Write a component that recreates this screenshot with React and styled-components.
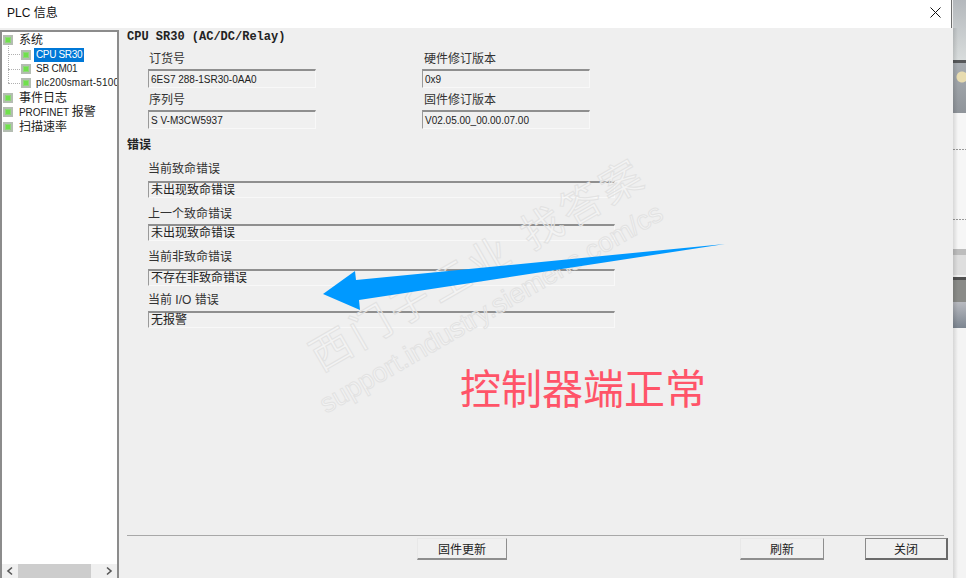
import React from "react";
import styled, { createGlobalStyle } from "styled-components";

const GlobalStyle = createGlobalStyle`
    html, body {
        margin: 0;
        padding: 0;
        background: #f4f4f4;
    }
    body {
        font-family: "Liberation Sans", "Noto Sans CJK SC", sans-serif;
        font-size: 12px;
        color: #222;
        overflow: hidden;
    }
    * { box-sizing: border-box; }
`;

const Page = styled.div`
    position: relative;
    width: 966px;
    height: 578px;
    display: flex;
    overflow: hidden;
`;

const Dialog = styled.div`
    width: 953px;
    height: 578px;
    display: flex;
    flex-flow: column nowrap;
    background: #efefef;
`;

const TitleBar = styled.div`
    height: 28px;
    width: 952px;
    padding: 5px 10px 0 7px;
    display: flex;
    justify-content: space-between;
    background: #fff;
    border-right: 1px solid #6e6e6e;
    font-size: 12px;
    line-height: 17px;
    color: #111;
`;

const CloseIcon = styled.svg`
    width: 11px;
    height: 11px;
    margin-top: 2px;
`;

const Body = styled.div`
    flex: 1;
    display: flex;
    min-height: 0;
`;

const Sidebar = styled.div`
    width: 119px;
    margin-top: 2px;
    display: flex;
    flex-flow: column nowrap;
    background: #fff;
    border-style: solid;
    border-color: #8c8c8c;
    border-width: 2px 2px 0 2px;
`;

const Tree = styled.div`
    flex: 1;
    overflow: hidden;
    padding-top: 1px;
`;

const Row = styled.div`
    position: relative;
    height: 14.4px;
    display: flex;
    align-items: center;
    gap: ${p => p.$level ? 3 : 4}px;
    padding-left: ${p => p.$level ? 19 : 1}px;
    white-space: nowrap;
    font-size: ${p => p.$latin ? 10 : 12}px;

    ${p => p.$level && `
        &:before {
            content: '';
            position: absolute;
            left: 6px;
            top: 7px;
            width: 12px;
            border-top: 1px dotted #b0b0b0;
        }
    `}
`;

const Group = styled.div`
    position: relative;

    &:before {
        content: '';
        position: absolute;
        left: 6px;
        top: -3px;
        height: 39px;
        border-left: 1px dotted #b0b0b0;
    }
`;

const Node = styled.span`
    flex: none;
    width: 10px;
    height: 10px;
    background: #6fe04c;
    border: 2px solid #b4bdb2;
    box-shadow: inset 0 0 0 1px #8ed878;
`;

const NodeLabel = styled.span`
    padding: 0 2px;
    line-height: 14px;
    letter-spacing: ${p => p.$spacing || 0}px;
    ${p => p.$selected && `
        background: #0078d7;
        color: #fff;
    `}
`;

const SmallCjk = styled.span`
    font-size: 12px;
`;

const HScroll = styled.div`
    height: 14px;
    display: flex;
    align-items: center;
    background: #f0f0f0;

    >svg:last-child{
        margin-left: auto;
    }
`;

const ScrollArrow = styled.svg`
    width: 16px;
    height: 14px;
    flex: none;
`;

const ScrollThumb = styled.div`
    width: 73px;
    height: 14px;
    background: #cdcdcd;
`;

const Main = styled.div`
    flex: 1;
    display: flex;
    flex-flow: column nowrap;
    padding: 2px 9px 0 8px;
    min-width: 0;
`;

const Heading = styled.div`
    font-family: "Liberation Mono", "Noto Sans CJK SC", monospace;
    font-weight: bold;
    font-size: 12px;
    line-height: 14px;
    color: #222;
`;

const InfoGrid = styled.div`
    display: grid;
    grid-template-columns: 168px 168px;
    column-gap: 106px;
    margin: 7px 0 0 21px;
`;

const Field = styled.div`
    display: flex;
    flex-flow: column nowrap;
    height: ${p => p.$height}px;
`;

const Label = styled.div`
    padding-left: ${p => p.$indent}px;
    font-size: 12px;
    line-height: 16px;
    height: ${p => p.$height}px;
    color: #333;
`;

const ValueBox = styled.div`
    height: ${p => p.$height || 19}px;
    padding: ${p => p.$cjk ? 0 : 1}px 0 0 2px;
    border-top: 2px solid #8f8f8f;
    border-left: 1px solid #9a9a9a;
    border-right: 1px solid #f8f8f8;
    border-bottom: 1px solid #f8f8f8;
    background: #f0f0f0;
    font-size: ${p => p.$cjk ? 12 : 10}px;
    line-height: 15px;
    white-space: nowrap;
    color: #222;
`;

const SectionTitle = styled(Heading)`
    font-family: "Liberation Sans", "Noto Sans CJK SC", sans-serif;
    margin-top: 5px;
`;

const ErrorList = styled.div`
    width: 467px;
    margin: 9px 0 0 21px;
    display: flex;
    flex-flow: column nowrap;
`;

const Footer = styled.div`
    margin-top: auto;
    height: 43px;
    padding-top: 2px;
    display: flex;
    border-top: 1px solid #a8a8a8;
`;

const Button = styled.div`
    flex: none;
    height: 22px;
    width: ${p => p.$width}px;
    margin-left: ${p => p.$left}px;
    display: flex;
    align-items: center;
    justify-content: center;
    font-size: 12px;
    background: #f0f0f0;
    border-style: solid;
    border-color: ${p => p.$primary ? "#8a8a8a #6a6a6a #6a6a6a #8a8a8a" : "#e8e8e8 #8e8e8e #8e8e8e #e8e8e8"};
    border-width: ${p => p.$primary ? "1px 2px 2px 1px" : "1px 1px 2px 1px"};
    color: #222;
`;

const BackWindow = styled.div`
    width: 13px;
    height: 578px;
    display: flex;
    flex-flow: column nowrap;
    position: relative;

    &:after {
        content: '';
        position: absolute;
        left: 0;
        top: 28px;
        bottom: 0;
        width: 5px;
        background: linear-gradient(to right, rgba(0,0,0,0.12), rgba(0,0,0,0));
    }
`;

const Band = styled.div`
    flex: ${p => p.$h ? `0 0 ${p.$h}px` : 1};
    background: ${p => p.$bg};
`;

const Overlay = styled.svg`
    position: absolute;
    left: 0;
    top: 0;
    pointer-events: none;
`;

const Watermark = styled.div`
    position: absolute;
    left: ${p => p.$x}px;
    top: ${p => p.$y}px;
    transform: rotate(-30deg);
    transform-origin: left center;
    white-space: nowrap;
    pointer-events: none;
    color: rgba(255,255,255,0.25);
    -webkit-text-stroke: 1px #e2e2e2;
    font-family: "Liberation Sans", "Noto Sans CJK SC", sans-serif;
    font-size: ${p => p.$size}px;
    line-height: 1;
    letter-spacing: ${p => p.$spacing || 0}px;
`;

const Annotation = styled.div`
    position: absolute;
    left: 460px;
    top: 362px;
    font-family: "Noto Sans CJK SC", sans-serif;
    font-size: 41px;
    line-height: 48px;
    color: #ff5468;
    white-space: nowrap;
`;

const topFields = [
    { label: "订货号", value: "6ES7 288-1SR30-0AA0", indent: 1 },
    { label: "硬件修订版本", value: "0x9", indent: 2 },
    { label: "序列号", value: "S V-M3CW5937", indent: 1 },
    { label: "固件修订版本", value: "V02.05.00_00.00.07.00", indent: 2 },
];

const errors = [
    { label: "当前致命错误", value: "未出现致命错误", height: 45, labelHeight: 20 },
    { label: "上一个致命错误", value: "未出现致命错误", height: 43, labelHeight: 18 },
    { label: "当前非致命错误", value: "不存在非致命错误", height: 43, labelHeight: 20 },
    { label: "当前 I/O 错误", value: "无报警", height: 40, labelHeight: 19 },
];

const dotted = "repeating-linear-gradient(to right, #999 0 2px, #f6f6f6 2px 3px)";
const bands = [
    { h: 60, bg: "linear-gradient(#b4b8bc, #d8dcdc)" },
    { h: 3, bg: "#56585a" },
    { h: 50, bg: "radial-gradient(circle at 9px 14px, #e8dcb0 0 5px, transparent 6px), linear-gradient(#a8adb2, #8f949a)" },
    { h: 36, bg: "#f6f6f6" },
    { h: 1, bg: dotted },
    { h: 69, bg: "#f6f6f6" },
    { h: 1, bg: dotted },
    { h: 29, bg: "#f6f6f6" },
    { h: 6, bg: "#bdbdbd" },
    { h: 20, bg: "#dedede" },
    { h: 2, bg: "#f0f0f0" },
    { h: 3, bg: "#505050" },
    { h: 22, bg: "#8a8b88" },
    { h: 26, bg: "linear-gradient(#b8bac0, #7c8590)" },
    { bg: "#f4f4f4" },
];

export default function App(){
    return <Page>
        <GlobalStyle />
        <Dialog>
            <TitleBar>
                <span>PLC 信息</span>
                <CloseIcon viewBox="0 0 11 11">
                    <path d="M0.5 0.5L10.5 10.5M10.5 0.5L0.5 10.5" stroke="#111" strokeWidth="1" fill="none" />
                </CloseIcon>
            </TitleBar>
            <Body>
                <Sidebar>
                    <Tree>
                        <Row><Node /><NodeLabel>系统</NodeLabel></Row>
                        <Group>
                            <Row $level={1} $latin><Node /><NodeLabel $selected $spacing={-0.35}>CPU SR30</NodeLabel></Row>
                            <Row $level={1} $latin><Node /><NodeLabel $spacing={-0.2}>SB CM01</NodeLabel></Row>
                            <Row $level={1} $latin><Node /><NodeLabel $spacing={0.2}>plc200smart-5100</NodeLabel></Row>
                        </Group>
                        <Row><Node /><NodeLabel>事件日志</NodeLabel></Row>
                        <Row $latin><Node /><NodeLabel $spacing={-0.05}>PROFINET <SmallCjk>报警</SmallCjk></NodeLabel></Row>
                        <Row><Node /><NodeLabel>扫描速率</NodeLabel></Row>
                    </Tree>
                    <HScroll>
                        <ScrollArrow viewBox="0 0 16 14">
                            <path d="M10 3.5L6 7L10 10.5" stroke="#555" strokeWidth="1.6" fill="none" />
                        </ScrollArrow>
                        <ScrollThumb />
                        <ScrollArrow viewBox="0 0 16 14">
                            <path d="M6 3.5L10 7L6 10.5" stroke="#555" strokeWidth="1.6" fill="none" />
                        </ScrollArrow>
                    </HScroll>
                </Sidebar>
                <Main>
                    <Heading>CPU SR30 (AC/DC/Relay)</Heading>
                    <InfoGrid>
                        {topFields.map(f =>
                            <Field key={f.label} $height={41}>
                                <Label $height={18} $indent={f.indent}>{f.label}</Label>
                                <ValueBox>{f.value}</ValueBox>
                            </Field>
                        )}
                    </InfoGrid>
                    <SectionTitle>错误</SectionTitle>
                    <ErrorList>
                        {errors.map(e =>
                            <Field key={e.label} $height={e.height}>
                                <Label $height={e.labelHeight} $indent={0}>{e.label}</Label>
                                <ValueBox $cjk $height={17}>{e.value}</ValueBox>
                            </Field>
                        )}
                    </ErrorList>
                    <Footer>
                        <Button $width={90} $left={290}>固件更新</Button>
                        <Button $width={84} $left={233}>刷新</Button>
                        <Button $width={83} $left={41} $primary>关闭</Button>
                    </Footer>
                </Main>
            </Body>
        </Dialog>
        <BackWindow>
            {bands.map((b, i) => <Band key={i} $h={b.h} $bg={b.bg} />)}
        </BackWindow>
        <Watermark $x={314} $y={340} $size={41} $spacing={4.5}>西门子工业 找答案</Watermark>
        <Watermark $x={322} $y={393} $size={27}>support.industry.siemens.com/cs</Watermark>
        <Overlay width="966" height="578" viewBox="0 0 966 578">
            <polygon points="323,294 355,271 356,280 725,244 359,300 360,310" fill="#0099ff" />
        </Overlay>
        <Annotation>控制器端正常</Annotation>
    </Page>
}
